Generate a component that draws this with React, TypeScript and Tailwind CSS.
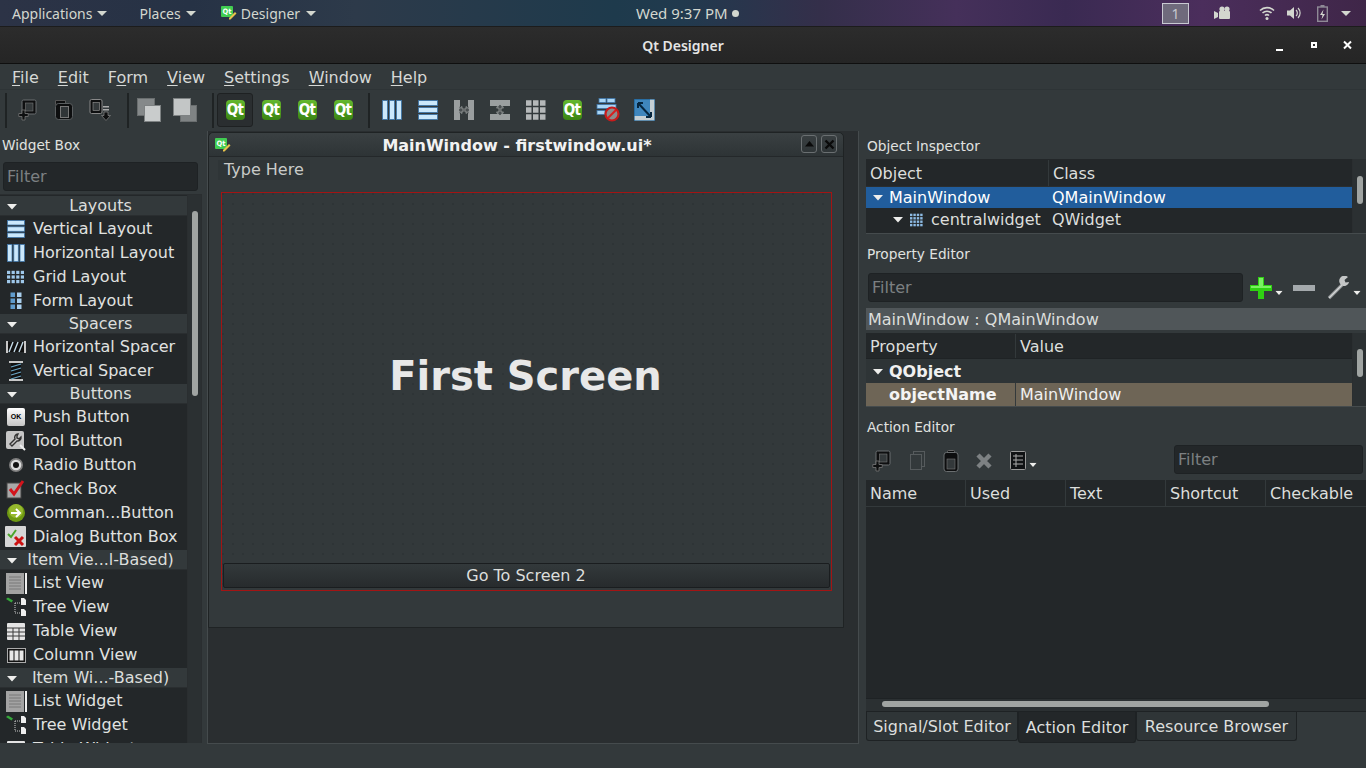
import * as React from 'react';

const dejavu = "font-['DejaVu_Sans',sans-serif]";

function QtBadge() {
  return (
    <div className="flex h-[20px] w-[19px] items-center justify-center rounded-[4px] bg-gradient-to-b from-[#64b82e] to-[#3a8512] font-['DejaVu_Sans_Condensed','DejaVu_Sans',sans-serif] text-[15px] leading-none font-bold tracking-[-0.8px] text-white">
      Qt
    </div>
  );
}

function Arrow({ className = '' }: { className?: string }) {
  return (
    <svg width="10" height="6" viewBox="0 0 10 6" className={className}>
      <path d="M0 0h10L5 5.5z" fill="#eeeeec" />
    </svg>
  );
}

function Caret({ className = '' }: { className?: string }) {
  return (
    <svg width="10" height="5" viewBox="0 0 10 5" className={className}>
      <path d="M0 0h10L5 5z" fill="#d3d7cf" />
    </svg>
  );
}

function CopyPlusIcon() {
  return (
    <svg width="20" height="22" viewBox="0 0 20 22">
      <rect x="4" y="1" width="14" height="14" rx="1.5" fill="#0e0f10" stroke="#6a6e70" />
      <rect x="7.5" y="4" width="7.5" height="8" fill="#34393b" stroke="#777" strokeWidth=".6" />
      <path d="M4 11v3.5H.8v3H4V21h3v-3.5h3.2v-3H7V11z" fill="#0e0f10" stroke="#777" strokeWidth=".8" />
    </svg>
  );
}

function CutIcon() {
  return (
    <svg width="20" height="22" viewBox="0 0 20 22">
      <path d="M1.5 1.5h10v4h-10z" fill="#0e0f10" stroke="#555" />
      <rect x="1.5" y="4.5" width="17" height="16" rx="3" fill="#0d0e0f" stroke="#5a5e60" />
      <rect x="6.5" y="7.5" width="8" height="11" fill="#303537" stroke="#777" />
    </svg>
  );
}

function SendDownIcon() {
  return (
    <svg width="22" height="22" viewBox="0 0 22 22">
      <rect x="1" y="0.5" width="12" height="14" rx="1.5" fill="#0e0f10" stroke="#888" />
      <rect x="4" y="3.5" width="6.5" height="8" fill="#34393b" stroke="#999" strokeWidth=".6" />
      <path d="M14 7h6v1.5h-6zM14 10h6v1.5h-6z" fill="#aaa" />
      <path d="M15 13h4v3.5h2.5L17 21.5l-4.5-5H15z" fill="#0e0f10" stroke="#888" strokeWidth=".7" />
    </svg>
  );
}

function ClipboardIcon() {
  return (
    <svg width="20" height="22" viewBox="0 0 20 22">
      <rect x="6.5" y="0.5" width="7" height="4" rx="1" fill="#0d0e0f" stroke="#666" />
      <rect x="3" y="2.5" width="14" height="19" rx="2.5" fill="#0d0e0f" stroke="#6a6e70" />
      <rect x="6" y="9" width="8" height="10" fill="#33383a" stroke="#777" strokeWidth=".6" />
    </svg>
  );
}

function OverlapIcon({ front }: { front: boolean }) {
  return (
    <svg width="24" height="24" viewBox="0 0 24 24">
      {front ? (
        <>
          <rect x="7.5" y="7.5" width="16" height="16" fill="#7f8384" stroke="#6a6e6f" />
          <rect x="0.5" y="0.5" width="17" height="17" fill="#c3c6c6" stroke="#7e8283" />
        </>
      ) : (
        <>
          <rect x="0.5" y="0.5" width="17" height="17" fill="#85898a" stroke="#6a6e6f" />
          <rect x="7.5" y="7.5" width="16" height="16" fill="#c9cccc" stroke="#7e8283" />
        </>
      )}
    </svg>
  );
}

function VerticalLayoutIcon({ size = 18 }: { size?: number }) {
  return (
    <svg width={size} height={size} viewBox="0 0 18 18">
      {[0.5, 6.8, 13].map(y => (
        <g key={y}>
          <rect x="0.5" y={y} width="17" height="4.5" fill="#cbe8fb" stroke="#3f76a8" strokeWidth=".8" />
        </g>
      ))}
    </svg>
  );
}

function HorizontalLayoutIcon({ size = 18 }: { size?: number }) {
  return (
    <svg width={size} height={size} viewBox="0 0 18 18">
      {[0.5, 6.8, 13].map(x => (
        <g key={x}>
          <rect x={x} y="0.5" width="4.5" height="17" fill="#cbe8fb" stroke="#3f76a8" strokeWidth=".8" />
        </g>
      ))}
    </svg>
  );
}

function GridIcon({
  cols = 4,
  rows = 3,
  color = '#9fc8ea',
  gap = 4.6,
  cell = 3.2,
  size = 18,
}: {
  cols?: number;
  rows?: number;
  color?: string;
  gap?: number;
  cell?: number;
  size?: number;
}) {
  const cells = [];
  for (let r = 0; r < rows; r++) {
    for (let c = 0; c < cols; c++) {
      cells.push(<rect key={`${r}-${c}`} x={c * gap} y={r * gap + (size - (rows - 1) * gap - cell) / 2} width={cell} height={cell} fill={color} />);
    }
  }
  return (
    <svg width={size} height={size} viewBox={`0 0 ${size} ${size}`}>
      {cells}
    </svg>
  );
}

function FormLayoutIcon() {
  return (
    <svg width="18" height="18" viewBox="0 0 18 18">
      {[0.5, 6.5, 12.5].flatMap(y =>
        [3.5, 10].map(x => <rect key={`${x}-${y}`} x={x} y={y} width="4.5" height="4.5" fill={x === 3.5 ? '#5f9bcc' : '#a9cfee'} />)
      )}
    </svg>
  );
}

function HSplitIcon() {
  return (
    <svg width="20" height="20" viewBox="0 0 20 20">
      <path d="M0 0h6v6l-1 4 1 4v6H0zM20 0h-6v6l1 4-1 4v6h6z" fill="#9a9e9f" />
      <path d="M4 10l4-3.5V9h4V6.500l4 3.500-4 3.500V11H8v2.500z" fill="#4a4f51" stroke="#a9adae" strokeWidth=".7" />
    </svg>
  );
}

function VSplitIcon() {
  return (
    <svg width="20" height="20" viewBox="0 0 20 20">
      <path d="M0 0h20v6h-6l-4 1-4-1H0zM0 20h20v-6h-6l-4-1-4 1H0z" fill="#9a9e9f" />
      <path d="M10 4l3.500 4H11v4h2.500L10 16l-3.500-4H9V8H6.500z" fill="#4a4f51" stroke="#a9adae" strokeWidth=".7" />
    </svg>
  );
}

function BreakLayoutIcon() {
  return (
    <svg width="24" height="24" viewBox="0 0 24 24">
      <rect x="3" y="0.5" width="7" height="4" fill="#a9d6f5" stroke="#3f76a8" strokeWidth=".8" />
      <rect x="11" y="0.5" width="8" height="4" fill="#a9d6f5" stroke="#3f76a8" strokeWidth=".8" />
      <rect x="1" y="6.500" width="19" height="4" fill="#a9d6f5" stroke="#3f76a8" strokeWidth=".8" />
      <rect x="1" y="12.500" width="8" height="4" fill="#a9d6f5" stroke="#3f76a8" strokeWidth=".8" />
      <circle cx="16" cy="16" r="6.500" fill="#8c8c8c" stroke="#c81a1a" strokeWidth="2.200" />
      <path d="M12 20l8-8" stroke="#d81e1e" strokeWidth="2" />
    </svg>
  );
}

function AdjustSizeIcon() {
  return (
    <svg width="21" height="22" viewBox="0 0 21 22">
      <rect x="0" y="0" width="21" height="22" fill="#c5cfd4" />
      <rect x="0" y="0" width="16" height="17" fill="#3f86bd" />
      <rect x="0" y="0" width="21" height="22" fill="none" stroke="#1c5f92" strokeWidth="1.200" />
      <path d="M4 4l13 14M4 4h5M4 4v5M17 18h-5M17 18v-5" stroke="#06263f" strokeWidth="2" fill="none" />
    </svg>
  );
}

function SpacerIcon({ vertical }: { vertical: boolean }) {
  if (vertical) {
    return (
      <svg width="14" height="20" viewBox="0 0 14 20">
        <path d="M0 0h14v2H0zM0 18h14v2H0z" fill="#c8c8c8" />
        <rect x="2" y="2" width="10" height="16" fill="#111" />
        <path d="M2 6l10-3M2 10l10-3M2 14l10-3M2 18l10-3" stroke="#6aa6c8" strokeWidth="1.300" />
      </svg>
    );
  }
  return (
    <svg width="20" height="12" viewBox="0 0 20 12">
      <path d="M0 0h2v12H0zM18 0h2v12h-2z" fill="#c8c8c8" />
      <rect x="2" y="1" width="16" height="10" fill="#111" />
      <path d="M3 11l4-10M8 11l4-10M13 11l4-10" stroke="#c4dbe8" strokeWidth="1.400" />
    </svg>
  );
}

function PushIcon() {
  return (
    <div className="flex h-[18px] w-[18px] items-center justify-center rounded-[2px] bg-gradient-to-b from-white to-[#c5c5c5] font-['Liberation_Sans',sans-serif] text-[7px] font-bold text-black">
      OK
    </div>
  );
}

function ToolIcon() {
  return (
    <svg width="20" height="20" viewBox="0 0 20 20">
      <rect x="0" y="0" width="18" height="18" rx="2" fill="#c6c6c6" />
      <path d="M12 3a3.500 3.500 0 0 0-3 5L4 13l2 2 5-5a3.500 3.500 0 0 0 4-4l-2 2-2-1V5z" fill="none" stroke="#333" strokeWidth="1.400" />
      <path d="M14 14l5 5" stroke="#eee" strokeWidth="2" />
    </svg>
  );
}

function RadioIcon() {
  return (
    <svg width="16" height="16" viewBox="0 0 16 16">
      <circle cx="8" cy="8" r="7" fill="#7e7e7e" />
      <circle cx="8" cy="8" r="5.300" fill="#dcdcdc" />
      <circle cx="8" cy="8" r="3" fill="#111" />
    </svg>
  );
}

function CheckIcon() {
  return (
    <svg width="20" height="20" viewBox="0 0 20 20">
      <rect x="1" y="4" width="14" height="15" fill="#a8a8a8" stroke="#444" />
      <path d="M4 10l4 5 9-13" fill="none" stroke="#d3141c" strokeWidth="3" />
    </svg>
  );
}

function CommandIcon() {
  return (
    <svg width="20" height="20" viewBox="0 0 20 20">
      <circle cx="10" cy="10" r="9" fill="#6f9a12" />
      <circle cx="10" cy="8" r="7" fill="#a6c63a" opacity=".7" />
      <path d="M5 10h8M10 6l4 4-4 4" fill="none" stroke="#fff" strokeWidth="2" />
    </svg>
  );
}

function DialogIcon() {
  return (
    <svg width="22" height="22" viewBox="0 0 22 22">
      <rect x="0" y="0" width="21" height="21" rx="1" fill="#d6d6d6" />
      <path d="M3 8l3 3 5-7" fill="none" stroke="#4aa52a" strokeWidth="2" />
      <path d="M10 11l8 8M18 11l-8 8" stroke="#cc1111" strokeWidth="3" />
    </svg>
  );
}

function ListIcon() {
  return (
    <svg width="21" height="21" viewBox="0 0 21 21">
      <rect x="0" y="0" width="18" height="21" fill="#a3a3a3" />
      <path d="M3 4h12M3 7h12M3 10h12M3 13h12M3 16h12" stroke="#787878" />
      <rect x="19" y="0" width="2" height="21" fill="#f0f0f0" />
    </svg>
  );
}

function TreeIcon() {
  return (
    <svg width="21" height="20" viewBox="0 0 21 20">
      <path d="M0 2l2-1.500 5 3-1.500 2z" fill="#35a83a" />
      <path d="M9 6v10M9 6h5M9 16h5" stroke="#ccc" strokeWidth="1" strokeDasharray="1 1" />
      <path d="M15 1h3l2 2v5h-5zM15 12h3l2 2v5h-5z" fill="#eee" />
    </svg>
  );
}

function TableIcon() {
  return (
    <svg width="18" height="17" viewBox="0 0 18 17">
      <rect x="0" y="0" width="18" height="17" rx="1" fill="#e4e4e4" />
      <path d="M0 5h18M0 9h18M0 13h18M6 5v12M12 5v12" stroke="#3a3a3a" strokeWidth="1" />
    </svg>
  );
}

function ColumnIcon() {
  return (
    <svg width="19" height="15" viewBox="0 0 19 15">
      <rect x="0.5" y="0.5" width="18" height="14" fill="#111" stroke="#aaa" />
      <rect x="2.500" y="2.500" width="4" height="10" fill="#e8e8e8" />
      <rect x="7.500" y="2.500" width="4" height="10" fill="#e8e8e8" />
      <rect x="12.500" y="2.500" width="4" height="10" fill="#e8e8e8" />
    </svg>
  );
}

function DesignerLogo() {
  return (
    <svg width="16" height="14" viewBox="0 0 16 14">
      <rect x="0" y="0" width="12" height="11" rx="1" fill="#41cd52" />
      <text x="1.500" y="8" fontSize="7.500" fontWeight="700" fill="#fff" fontFamily="'DejaVu Sans Condensed',sans-serif">
        Qt
      </text>
      <path d="M8 12l6-6 1.500 1.500-6 6H8z" fill="#e8c34a" />
    </svg>
  );
}

type BoxRow = { icon: React.ReactNode; label: string };
type BoxGroup = { title: string; rows: BoxRow[] };

const widgetGroups: BoxGroup[] = [
  {
    title: 'Layouts',
    rows: [
      { icon: <VerticalLayoutIcon />, label: 'Vertical Layout' },
      { icon: <HorizontalLayoutIcon />, label: 'Horizontal Layout' },
      { icon: <GridIcon />, label: 'Grid Layout' },
      { icon: <FormLayoutIcon />, label: 'Form Layout' },
    ],
  },
  {
    title: 'Spacers',
    rows: [
      { icon: <SpacerIcon vertical={false} />, label: 'Horizontal Spacer' },
      { icon: <SpacerIcon vertical />, label: 'Vertical Spacer' },
    ],
  },
  {
    title: 'Buttons',
    rows: [
      { icon: <PushIcon />, label: 'Push Button' },
      { icon: <ToolIcon />, label: 'Tool Button' },
      { icon: <RadioIcon />, label: 'Radio Button' },
      { icon: <CheckIcon />, label: 'Check Box' },
      { icon: <CommandIcon />, label: 'Comman...Button' },
      { icon: <DialogIcon />, label: 'Dialog Button Box' },
    ],
  },
  {
    title: 'Item Vie...l-Based)',
    rows: [
      { icon: <ListIcon />, label: 'List View' },
      { icon: <TreeIcon />, label: 'Tree View' },
      { icon: <TableIcon />, label: 'Table View' },
      { icon: <ColumnIcon />, label: 'Column View' },
    ],
  },
  {
    title: 'Item Wi...-Based)',
    rows: [
      { icon: <ListIcon />, label: 'List Widget' },
      { icon: <TreeIcon />, label: 'Tree Widget' },
      { icon: <TableIcon />, label: 'Table Widget' },
    ],
  },
];

function TopBar() {
  return (
    <div className="flex h-[27px] items-center border-b border-[#1c1c1c] bg-[linear-gradient(90deg,#2c3346_0%,#263245_14%,#2d3a4a_26%,#1e3a4c_45%,#213a4e_50%,#342f4a_60%,#45305a_70%,#3a2a52_78%,#4b2e5c_88%,#3f2648_100%)] font-['Noto_Sans',sans-serif] text-[14px] text-[#d3d7cf]">
      <div className="flex w-[610px] flex-none items-center pl-[12px]">
        <span className="flex items-center">
          Applications
          <Caret className="ml-[5px]" />
        </span>
        <span className="ml-[32px] flex items-center">
          Places
          <Caret className="ml-[5px]" />
        </span>
        <span className="ml-[25px] flex items-center gap-[4px]">
          <DesignerLogo />
          Designer
          <Caret className="ml-[2px]" />
        </span>
      </div>
      <div className="flex w-[136px] flex-none items-center gap-[4px] pl-[26px] text-[15px]">
        Wed 9:37 PM
        <span className="h-[7px] w-[7px] rounded-full bg-[#d3d7cf]" />
      </div>
      <div className="flex flex-1 items-center">
        <span className="ml-[416px] flex h-[21px] w-[27px] items-center justify-center border border-[#c9c9d2] bg-[#6f6a7c] text-[14px] text-[#c8c8d0]">
          1
        </span>
        <svg width="16" height="14" viewBox="0 0 16 14" className="ml-[25px]">
          <path d="M0 5l4 2v4l-4 2z" fill="#d3d7cf" />
          <rect x="5" y="5" width="11" height="8" rx="1" fill="#d3d7cf" />
          <circle cx="8" cy="3" r="2.600" fill="#d3d7cf" />
          <circle cx="13" cy="3" r="2.600" fill="#d3d7cf" />
        </svg>
        <svg width="16" height="14" viewBox="0 0 16 14" className="ml-[29px]">
          <path d="M1 4.500a10 10 0 0 1 14 0M3.500 7a6.500 6.500 0 0 1 9 0M6 9.500a3 3 0 0 1 4 0" fill="none" stroke="#d3d7cf" strokeWidth="1.600" />
          <circle cx="8" cy="12.500" r="1.500" fill="#d3d7cf" />
        </svg>
        <svg width="14" height="14" viewBox="0 0 14 14" className="ml-[12px]">
          <path d="M0 4.500h3L7 1v12L3 9.500H0z" fill="#d3d7cf" />
          <path d="M9 4a4 4 0 0 1 0 6M11 2a7 7 0 0 1 0 10" fill="none" stroke="#d3d7cf" strokeWidth="1.200" />
        </svg>
        <svg width="11" height="17" viewBox="0 0 11 17" className="ml-[16px]">
          <path d="M3.500 0h4v2h-4z" fill="#8f8a96" />
          <rect x="0.700" y="2" width="9.600" height="14.300" fill="none" stroke="#8f8a96" strokeWidth="1.400" />
          <path d="M6.500 4.500L3 10h2.500l-1 4.500L8 9H5.500z" fill="#d3d7cf" />
        </svg>
        <Caret className="ml-[13px]" />
      </div>
    </div>
  );
}

function TitleBar() {
  return (
    <div className="flex h-[37px] items-center border-b border-[#0f0f0f] bg-gradient-to-b from-[#2c2c2c] to-[#252525] font-['Noto_Sans',sans-serif] text-[#e4e4e4]">
      <div className="w-[1250px] flex-none pl-[116px] text-center text-[14px] font-semibold">Qt Designer</div>
      <div className="flex flex-1 items-center pl-[26px]">
        <span className="mt-[9px] h-[2px] w-[7px] bg-white" />
        <span className="ml-[28px] flex h-[6px] w-[6px] items-center justify-center border-2 border-white" />
        <svg width="10" height="10" viewBox="0 0 10 10" className="ml-[26px]">
          <path d="M1 1.500l7 7M8 1.500l-7 7" stroke="#fff" strokeWidth="2" />
        </svg>
      </div>
    </div>
  );
}

function MenuBar() {
  const menus: [string, string][] = [
    ['F', 'ile'],
    ['E', 'dit'],
    ['Fo', 'rm'],
    ['V', 'iew'],
    ['S', 'ettings'],
    ['W', 'indow'],
    ['H', 'elp'],
  ];
  return (
    <div className="flex h-[26px] items-center gap-[19px] border-b border-[#2e3436] pt-[2px] pl-[12px] text-[16px] text-[#d6d8d6]">
      {menus.map(([head, rest]) => (
        <span key={head}>
          {head === 'Fo' ? (
            <>
              F<span className="underline underline-offset-2">o</span>
            </>
          ) : (
            <span className="underline underline-offset-2">{head}</span>
          )}
          {rest}
        </span>
      ))}
    </div>
  );
}

function ToolSep({ className = '' }: { className?: string }) {
  return <div className={`h-[35px] w-[2px] flex-none bg-[#1f2324] ${className}`} />;
}

function ToolBtn({ children, active = false }: { children: React.ReactNode; active?: boolean }) {
  return (
    <div
      className={`flex h-[34px] w-[36px] items-center justify-center rounded-[3px] ${active ? 'border border-[#1e2122] bg-[#2a2e30]' : ''}`}
    >
      {children}
    </div>
  );
}

function ToolBar() {
  return (
    <div className="flex h-[40px] items-center pl-[5px]">
      <ToolSep />
      <div className="ml-[3px] flex">
        <ToolBtn><CopyPlusIcon /></ToolBtn>
        <ToolBtn><CutIcon /></ToolBtn>
        <ToolBtn><SendDownIcon /></ToolBtn>
      </div>
      <ToolSep className="ml-[9px]" />
      <div className="ml-[2px] flex">
        <ToolBtn><OverlapIcon front={false} /></ToolBtn>
        <ToolBtn><OverlapIcon front /></ToolBtn>
      </div>
      <ToolSep className="ml-[9px]" />
      <div className="ml-[3px] flex">
        <ToolBtn active><QtBadge /></ToolBtn>
        <ToolBtn><QtBadge /></ToolBtn>
        <ToolBtn><QtBadge /></ToolBtn>
        <ToolBtn><QtBadge /></ToolBtn>
      </div>
      <ToolSep className="ml-[7px]" />
      <div className="ml-[4px] flex">
        <ToolBtn><HorizontalLayoutIcon size={20} /></ToolBtn>
        <ToolBtn><VerticalLayoutIcon size={20} /></ToolBtn>
        <ToolBtn><HSplitIcon /></ToolBtn>
        <ToolBtn><VSplitIcon /></ToolBtn>
        <ToolBtn><GridIcon cols={3} color="#b5b8b9" gap={7} cell={5.500} size={20} /></ToolBtn>
        <ToolBtn><QtBadge /></ToolBtn>
        <ToolBtn><BreakLayoutIcon /></ToolBtn>
        <ToolBtn><AdjustSizeIcon /></ToolBtn>
      </div>
    </div>
  );
}

function FilterInput({ className = '' }: { className?: string }) {
  return (
    <div
      className={`flex h-[29px] flex-none items-center rounded-[3px] border border-[#1e2224] bg-[#232729] pt-[1px] pl-[3px] text-[16px] text-[#7c8082] ${className}`}
    >
      Filter
    </div>
  );
}

function WidgetBox() {
  return (
    <div className="flex w-[202px] flex-none flex-col">
      <div className="flex h-[31px] items-center pl-[2px] text-[13.7px] text-[#e0e2e0]">Widget Box</div>
      <FilterInput className="mx-[3px] mt-[1px] w-[195px]" />
      <div className="relative mt-[3px] h-[549px] overflow-hidden border-t border-r border-[#2a2e30] bg-[#232729]">
        <div className="w-[187px]">
          {widgetGroups.map(group => (
            <div key={group.title}>
              <div className="relative mt-[1px] mb-[1px] flex h-[20px] items-center justify-center border-b border-[#2a2e30] bg-[#33393b] pt-[1px] pl-[14px] text-[16px] text-[#dcdedc]">
                <Arrow className="absolute top-[8px] left-[7px]" />
                {group.title}
              </div>
              {group.rows.map(row => (
                <div key={row.label} className="flex h-[24px] items-center text-[16px] text-[#e0e2e0]">
                  <div className="flex w-[32px] flex-none items-center justify-center">{row.icon}</div>
                  <span className="ml-[1px] pb-[1px]">{row.label}</span>
                </div>
              ))}
            </div>
          ))}
        </div>
        <div className="absolute top-0 right-0 bottom-0 w-[14px] border-l border-[#2a2e30] bg-[#2b3032]">
          <div className="mx-auto mt-[16px] h-[185px] w-[6px] rounded-[3px] bg-[#a0a4a2]" />
        </div>
      </div>
    </div>
  );
}

function FormWindow() {
  return (
    <div className="mt-[1px] h-[496px] w-[636px] rounded-t-[5px] border border-[#1f2324] bg-[#33393b]">
      <div className="relative flex h-[24px] items-center justify-center rounded-t-[5px] border-b border-[#24282a] bg-gradient-to-b from-[#3a4042] to-[#2e3436] pr-[18px]">
        <div className="absolute top-[5px] left-[6px] flex">
          <DesignerLogo />
        </div>
        <span className="pt-[2px] text-[16px] font-bold text-[#f2f2f2]">MainWindow - firstwindow.ui*</span>
        <div className="absolute top-[2px] right-[6px] flex gap-[4px]">
          <div className="flex h-[18px] w-[16px] items-center justify-center rounded-[3px] border border-[#6a6f71]">
            <svg width="9" height="6" viewBox="0 0 9 6">
              <path d="M0 5.500L4.500 0 9 5.500z" fill="#0a0a0a" />
            </svg>
          </div>
          <div className="flex h-[18px] w-[16px] items-center justify-center rounded-[3px] border border-[#6a6f71]">
            <svg width="11" height="11" viewBox="0 0 11 11">
              <path d="M1.500 1.500l8 8M9.500 1.500l-8 8" stroke="#0a0a0a" strokeWidth="2.400" />
            </svg>
          </div>
        </div>
      </div>
      <div className="flex h-[25px] items-center pl-[9px]">
        <div className="flex h-[20px] items-center bg-[#2f3537] px-[6px] pt-[1px] text-[16px] text-[#c8cac8]">Type Here</div>
      </div>
      <div className="mx-[12px] mt-[10px] flex h-[399px] w-[611px] flex-col border border-[#a31414] bg-[radial-gradient(circle_at_1px_1px,#2b3032_0.5px,transparent_1px)] bg-[length:10px_10px]">
        <div className="flex flex-1 items-center justify-center pr-[2px] pb-[5px] text-[40px] leading-none font-bold text-[#e8e8e8]">
          First Screen
        </div>
        <div className="mx-[1px] mb-[2px] flex h-[25px] items-center justify-center rounded-[2px] border border-[#1a1d1f] bg-gradient-to-b from-[#33393b] to-[#272b2d] pt-[1px] pr-[1px] text-[16px] text-[#dcdedc]">
          Go To Screen 2
        </div>
      </div>
    </div>
  );
}

function PanelTitle({ children }: { children: React.ReactNode }) {
  return <div className="flex items-center pl-[1px] text-[13.7px] text-[#e0e2e0]">{children}</div>;
}

function HeaderCell({ children, className = '' }: { children: React.ReactNode; className?: string }) {
  return <div className={`flex h-full items-center border-r border-[#33393b] pt-[1px] pl-[4px] ${className}`}>{children}</div>;
}

function VScroll({ thumb, top }: { thumb: string; top: string }) {
  return (
    <div className="w-[14px] flex-none border-l border-[#2a2e30] bg-[#2b3032]">
      <div className={`mx-auto w-[6px] rounded-[3px] bg-[#a0a4a2] ${thumb} ${top}`} />
    </div>
  );
}

function ObjectInspector() {
  return (
    <div>
      <div className="h-[29px] pt-[6px]">
        <PanelTitle>Object Inspector</PanelTitle>
      </div>
      <div className="flex h-[75px] border-b border-[#454b4d] bg-[#232729] text-[16px] text-[#dcdedc]">
        <div className="flex-1">
          <div className="flex h-[28px] items-center border-b border-[#2a2e30] pt-[1px]">
            <HeaderCell className="w-[183px]">Object</HeaderCell>
            <div className="pt-[1px] pl-[4px]">Class</div>
          </div>
          <div className="flex h-[21px] items-center bg-[#215d9c] text-white">
            <Arrow className="ml-[7px]" />
            <span className="ml-[6px] w-[163px]">MainWindow</span>
            <span>QMainWindow</span>
          </div>
          <div className="flex h-[24px] items-center">
            <Arrow className="ml-[27px]" />
            <span className="ml-[7px] flex">
              <GridIcon rows={4} color="#8dbbe4" gap={3.400} cell={2.400} />
            </span>
            <span className="ml-[3px] w-[121px]">centralwidget</span>
            <span>QWidget</span>
          </div>
        </div>
        <VScroll thumb="h-[28px]" top="mt-[17px]" />
      </div>
    </div>
  );
}

function PropertyEditor() {
  return (
    <div>
      <div className="h-[39px] pt-[10px]">
        <PanelTitle>Property Editor</PanelTitle>
      </div>
      <div className="flex h-[29px] items-center">
        <FilterInput className="ml-[2px] w-[375px]" />
        <svg width="22" height="22" viewBox="0 0 22 22" className="ml-[7px]">
          <path d="M8 0h6v8h8v6h-8v8H8v-8H0V8h8z" fill="#2fd012" />
          <path d="M9 1h4v8h8v2H9zM1 9h8v2H1z" fill="#7af062" />
        </svg>
        <Arrow className="mt-[11px] ml-[2px] scale-75" />
        <svg width="22" height="6" viewBox="0 0 22 6" className="ml-[9px]">
          <rect width="22" height="6" fill="#a4a9ac" />
        </svg>
        <svg width="24" height="24" viewBox="0 0 24 24" className="ml-[12px]">
          <path d="M2 22L15 9" stroke="#8b8f90" strokeWidth="3.400" />
          <path d="M2 22L15 9" stroke="#d4d6d6" strokeWidth="1.400" />
          <path d="M14 9a5 5 0 0 1 7-8l-3.500 3 1 2.500L22 6a5 5 0 0 1-8 3z" fill="#c4c6c6" />
        </svg>
        <Arrow className="mt-[10px] ml-[1px] scale-75" />
      </div>
      <div className="mt-[6px] flex h-[22px] items-center bg-[#505659] pt-[1px] pl-[2px] text-[16px] text-[#dcdedc]">
        MainWindow : QMainWindow
      </div>
      <div className="mt-[3px] flex h-[74px] border-b border-[#454b4d] text-[16px] text-[#dcdedc]">
        <div className="flex-1">
          <div className="flex h-[26px] items-center border-b border-[#1f2325] bg-[#232729] pt-[1px]">
            <HeaderCell className="w-[150px]">Property</HeaderCell>
            <div className="pt-[1px] pl-[4px]">Value</div>
          </div>
          <div className="flex h-[24px] items-center bg-[#2e3436] pt-[1px] font-bold text-[#f0f0f0]">
            <Arrow className="ml-[7px]" />
            <span className="ml-[6px]">QObject</span>
          </div>
          <div className="flex h-[23px] items-center bg-[#6e6556]">
            <span className="w-[150px] border-r border-[#33393b] pl-[23px] leading-[23px] font-bold text-[#f4f4f4]">objectName</span>
            <span className="pl-[4px] text-[#f0f0f0]">MainWindow</span>
          </div>
        </div>
        <VScroll thumb="h-[28px]" top="mt-[16px]" />
      </div>
    </div>
  );
}

function ActionEditor() {
  return (
    <div className="flex min-h-0 flex-1 flex-col">
      <div className="h-[34px] flex-none pt-[10px]">
        <PanelTitle>Action Editor</PanelTitle>
      </div>
      <div className="flex h-[39px] flex-none items-center">
        <div className="ml-[6px] flex">
          <CopyPlusIcon />
        </div>
        <svg width="20" height="22" viewBox="0 0 20 22" className="ml-[15px]">
          <rect x="6.500" y="1.500" width="11" height="15" fill="none" stroke="#565b5d" />
          <rect x="3.500" y="4.500" width="11" height="15" fill="#33393b" stroke="#565b5d" />
        </svg>
        <div className="ml-[14px] flex">
          <ClipboardIcon />
        </div>
        <svg width="18" height="18" viewBox="0 0 18 18" className="ml-[14px]">
          <path d="M3 3l12 12M15 3L3 15" stroke="#7d8183" strokeWidth="4.500" />
        </svg>
        <svg width="18" height="20" viewBox="0 0 18 20" className="ml-[17px]">
          <rect x="0.500" y="0.500" width="15" height="18" rx="1" fill="#101214" stroke="#999" />
          <path d="M3 5h10M3 9h10M3 13h10M6 3v13" stroke="#aaa" />
        </svg>
        <Arrow className="mt-[8px] scale-75" />
        <FilterInput className="mb-[2px] ml-[136px] w-[189px]" />
      </div>
      <div className="flex h-[27px] flex-none items-center border-b border-[#33393b] bg-[#232729] text-[16px] text-[#dcdedc]">
        <HeaderCell className="w-[100px]">Name</HeaderCell>
        <HeaderCell className="w-[100px]">Used</HeaderCell>
        <HeaderCell className="w-[100px]">Text</HeaderCell>
        <HeaderCell className="w-[100px]">Shortcut</HeaderCell>
        <div className="pt-[1px] pl-[4px]">Checkable</div>
      </div>
      <div className="h-[191px] flex-none bg-[#232729]" />
      <div className="h-[14px] flex-none border-y border-[#1e2224] bg-[#2b3032]">
        <div className="mt-[2px] ml-[16px] h-[6px] w-[387px] rounded-[3px] bg-[#a0a4a2]" />
      </div>
      <div className="flex h-[31px] flex-none items-start text-[16px] text-[#dcdedc]">
        <div className="flex h-[29px] w-[152px] items-center justify-center rounded-b-[3px] border border-t-0 border-[#1e2224] bg-[#2f3537] pt-[2px]">
          Signal/Slot Editor
        </div>
        <div className="flex h-[31px] w-[118px] items-center justify-center rounded-b-[3px] border border-t-0 border-[#1e2224] bg-[#232729] pt-[1px]">
          Action Editor
        </div>
        <div className="flex h-[29px] w-[161px] items-center justify-center rounded-b-[3px] border border-t-0 border-[#1e2224] bg-[#2f3537] pt-[2px]">
          Resource Browser
        </div>
      </div>
    </div>
  );
}

export default function App() {
  return (
    <div className={`flex h-[768px] w-[1366px] flex-col overflow-hidden bg-[#33393b] ${dejavu}`}>
      <TopBar />
      <TitleBar />
      <MenuBar />
      <ToolBar />
      <div className="flex h-[638px] flex-none">
        <WidgetBox />
        <div className="mt-[1px] ml-[5px] h-[613px] w-[652px] flex-none border-r border-b border-l border-[#454b4d] bg-[#2a2e30]">
          <FormWindow />
        </div>
        <div className="ml-[7px] flex h-[613px] w-[500px] flex-none flex-col">
          <ObjectInspector />
          <PropertyEditor />
          <ActionEditor />
        </div>
      </div>
    </div>
  );
}
